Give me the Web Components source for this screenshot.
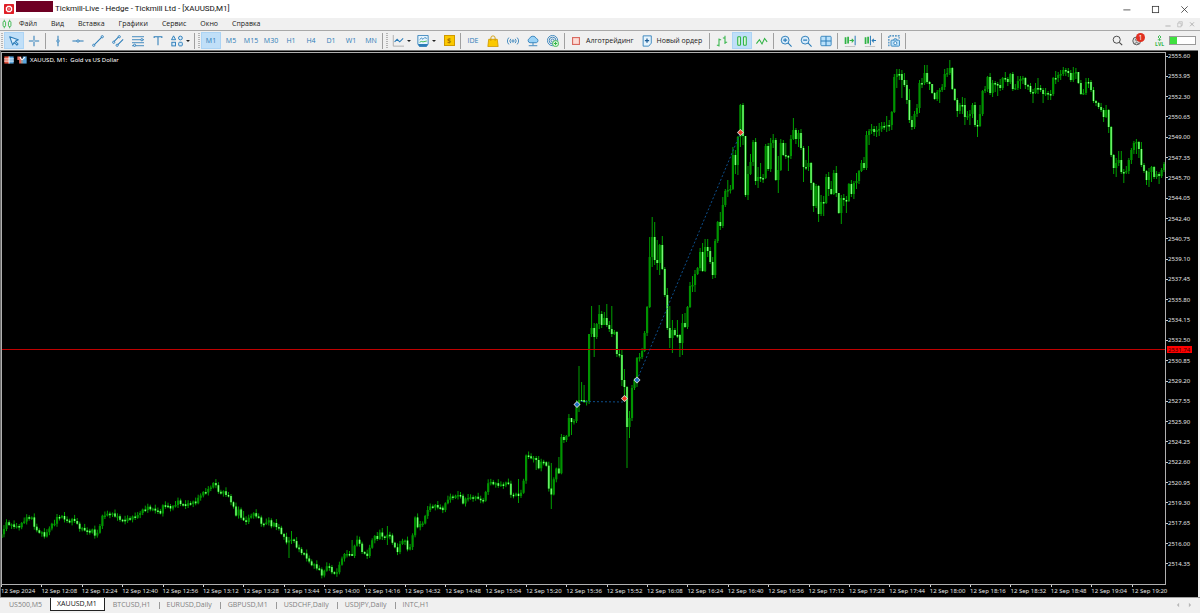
<!DOCTYPE html>
<html lang="ru">
<head>
<meta charset="utf-8">
<title>Tickmill-Live - Hedge - Tickmill Ltd - [XAUUSD,M1]</title>
<style>
  html, body {
    height: 100%;
    margin: 0;
  }

  body {
    background: #f0f0f0;
    color: #1a1a1a;
    font-family: "Open Sans", "Noto Sans", sans-serif;
    font-size: 7px;
    line-height: 10px;
    overflow: hidden;
  }
</style>
</head>
<body>
<terminal-window></terminal-window>

<script>
const BLUE = "#2b7cb8";
const GREEN = "#2fb344";

const ICONS = {
  logo: `<rect width="14" height="14" rx="1" fill="#e01e26"/><path d="M5 2.500h4L11.500 5v4L9 11.500H5L2.500 9V5z" fill="#fff"/><path d="M5.500 4.500h3l1 1v3l-1 1h-3l-1-1v-3z" fill="#e01e26"/><circle cx="7" cy="7" r="1" fill="#fff"/>`,
  candlesSmall: `<g fill="none" stroke="${GREEN}" stroke-width="1.200"><rect x="1.500" y="3.500" width="3.500" height="7" rx="1"/><rect x="9" y="3.500" width="3.500" height="7" rx="1"/><path d="M3.200 1v2M3.200 11v2M10.700 1v2M10.700 11v2"/></g>`,
  cursor: `<path d="M2 2l10 3.500-3.500 1.800 3.300 3.200-1.400 1.400-3.200-3.300-1.800 3z" fill="#d9ecfb" stroke="${BLUE}" stroke-width="1.200" stroke-linejoin="round"/>`,
  cross: `<path d="M7 1v12M1 7h12" stroke="${BLUE}" stroke-width="1.200"/><circle cx="7" cy="7" r="1" fill="#f0f0f0"/>`,
  vline: `<path d="M7 1v12" stroke="${BLUE}" stroke-width="1.200"/><circle cx="7" cy="7" r="1.400" fill="#d9ecfb" stroke="${BLUE}"/>`,
  hline: `<path d="M0.500 7h13" stroke="${BLUE}" stroke-width="1.200"/><circle cx="7" cy="7" r="1.400" fill="#d9ecfb" stroke="${BLUE}"/>`,
  trend: `<path d="M2 12L12 2" stroke="${BLUE}" stroke-width="1.200"/><circle cx="2" cy="12" r="1.300" fill="#d9ecfb" stroke="${BLUE}"/><circle cx="12" cy="2" r="1.300" fill="#d9ecfb" stroke="${BLUE}"/>`,
  channel: `<path d="M2 8l6-6M6 12l7-7" stroke="${BLUE}" stroke-width="1.200"/><circle cx="2" cy="8.500" r="1.300" fill="#d9ecfb" stroke="${BLUE}"/><circle cx="8.500" cy="2" r="1.300" fill="#d9ecfb" stroke="${BLUE}"/><circle cx="6" cy="12" r="1.300" fill="#d9ecfb" stroke="${BLUE}"/>`,
  fibo: `<path d="M0 2h14M0 5.500h14M0 9h14M0 12.500h14" stroke="${BLUE}"/><circle cx="11.500" cy="5.500" r="1.300" fill="#d9ecfb" stroke="${BLUE}"/><circle cx="3" cy="12" r="1.300" fill="#d9ecfb" stroke="${BLUE}"/>`,
  text: `<path d="M2.500 3.500V2h9v1.500M7 2v10" fill="none" stroke="${BLUE}" stroke-width="1.200"/>`,
  shapes: `<g fill="#d9ecfb" stroke="${BLUE}" stroke-width="1.100"><path d="M3 1l2.400 4.500H0.600z"/><circle cx="11" cy="3.500" r="2.200"/><rect x="1" y="8.500" width="4.200" height="4.200"/><rect x="9" y="8.500" width="4.200" height="4.200" rx="1"/></g>`,
  lineChart: `<path d="M1.500 0v13H14" fill="none" stroke="#aaa"/><path d="M3 8l3-3 3 3 4-4" fill="none" stroke="${BLUE}" stroke-width="1.200"/>`,
  indicator: `<path d="M1 0.500h12v10l-2 3H3l-2-3z" fill="#e6f4fd" stroke="${BLUE}"/><path d="M1 10.500h12l-2 3H3z" fill="${BLUE}"/><path d="M3 5.500l2-2 2 1.500 2-2 2.500 1" fill="none" stroke="${BLUE}"/><path d="M3 8.500l2-1 2 .5 4.500-1" fill="none" stroke="${GREEN}"/>`,
  bag: `<path d="M2 5h10l1 8.500H1z" fill="#fbc900" stroke="#d09a00"/><path d="M4.500 7V3.500a2.500 2.500 0 0 1 5 0V7" fill="none" stroke="#d09a00"/>`,
  signal: `<circle cx="7" cy="7" r="1.300" fill="none" stroke="${BLUE}"/><path d="M4.500 4.500a3.500 3.500 0 0 0 0 5M9.500 4.500a3.500 3.500 0 0 1 0 5M2.200 3a6 6 0 0 0 0 8M11.800 3a6 6 0 0 1 0 8" fill="none" stroke="${BLUE}"/>`,
  cloud: `<path d="M3.500 9a2.600 2.600 0 0 1-.5-5 4.200 4.200 0 0 1 7.800 0A2.600 2.600 0 0 1 11 9z" fill="#9bd3f7" stroke="${BLUE}"/><path d="M7 9v3M2 12.500h10" stroke="${BLUE}"/>`,
  target: `<g fill="none" stroke="${BLUE}"><circle cx="6.500" cy="6.500" r="6"/><circle cx="6.500" cy="6.500" r="4"/><circle cx="6.500" cy="6.500" r="1.800"/></g><circle cx="10" cy="10" r="3.500" fill="#e8fbe8" stroke="${GREEN}"/><path d="M10 8v4M8 10h4" stroke="${GREEN}" stroke-width="1.200"/>`,
  stop: `<rect x="3" y="3" width="8" height="8" fill="#fddcd6" stroke="#d96a60" stroke-width="1.300"/>`,
  order: `<path d="M2.500 1h9.500v8.500l-3 3.500H2.500z" fill="#e6f4fd" stroke="${BLUE}" stroke-linejoin="round"/><path d="M7 4v5M4.500 6.500h5" stroke="#1f5f98" stroke-width="1.500"/>`,
  bars: `<path d="M3.500 4v9.500M1 12h2.500M3.500 5.500H6M10.500 1v9.500M8 3.500h2.500M10.500 8.500H13" stroke="${GREEN}" stroke-width="1.200"/>`,
  candles: `<g fill="#d8f7d8" stroke="${GREEN}" stroke-width="1.200"><rect x="2" y="2" width="3.300" height="10" rx="1"/><rect x="8.700" y="2" width="3.300" height="10" rx="1"/></g>`,
  line: `<path d="M0.500 10L4 5.500l3 5L10 4l3 4" fill="none" stroke="${GREEN}" stroke-width="1.200"/>`,
  zoomIn: `<circle cx="6" cy="6" r="4.600" fill="#d9ecfb" stroke="${BLUE}" stroke-width="1.100"/><path d="M9.300 9.300l4.200 4.200M3.700 6h4.600M6 3.700v4.600" stroke="${BLUE}" stroke-width="1.300"/>`,
  zoomOut: `<circle cx="6" cy="6" r="4.600" fill="#d9ecfb" stroke="${BLUE}" stroke-width="1.100"/><path d="M9.300 9.300l4.200 4.200M3.700 6h4.600" stroke="${BLUE}" stroke-width="1.300"/>`,
  tile: `<rect x="1" y="1.500" width="12" height="11" rx="1" fill="#b9e1fb" stroke="${BLUE}"/><path d="M7 1.500v11M1 7h12" stroke="${BLUE}" stroke-width="1.200"/>`,
  shift: `<path d="M1 13.500h12" stroke="#bbb"/><path d="M1.800 2.500v8M4.800 2v8" stroke="${GREEN}" stroke-width="2"/><path d="M6.500 6.500h4.500M9 4.500l2 2-2 2" fill="none" stroke="${GREEN}" stroke-width="1.200"/><path d="M13 1v11" stroke="${BLUE}" stroke-width="1.200"/>`,
  scroll: `<path d="M1 13.500h12" stroke="#bbb"/><path d="M1.800 2.500v8M4.800 2v8" stroke="${GREEN}" stroke-width="2"/><path d="M7.500 1v11" stroke="${BLUE}" stroke-width="1.200"/><path d="M14 6.500H9.500M11.500 4.500l-2 2 2 2" fill="none" stroke="${BLUE}" stroke-width="1.200"/>`,
  camera: `<path d="M1 13V1h12v3" fill="none" stroke="${BLUE}" stroke-width="1.300" stroke-dasharray="2 1.200"/><rect x="3.500" y="6" width="10" height="7" rx="1" fill="#b9e1fb" stroke="${BLUE}"/><path d="M6.500 6l.8-1.500h2.500l.8 1.500" fill="#b9e1fb" stroke="${BLUE}"/><circle cx="8.500" cy="9.500" r="1.800" fill="#fff" stroke="${BLUE}"/>`,
  search: `<circle cx="6" cy="6" r="4.500" fill="none" stroke="#444" stroke-width="1.200"/><path d="M9.300 9.300l3.700 3.700" stroke="#444" stroke-width="1.300"/>`,
  profile: `<circle cx="6" cy="7.500" r="5" fill="#ddd" stroke="#555" stroke-width="1.200"/><circle cx="6" cy="6" r="1.500" fill="none" stroke="#555"/><path d="M3 11q3-3 6 0" fill="none" stroke="#555"/>`,
  level: `<path d="M7 1l3 3-3 3-3-3z" fill="none" stroke="${GREEN}" stroke-width="1.800"/><path d="M7 7v5M3.500 9.500h7" stroke="${GREEN}" stroke-width="1.500"/>`,
  minimize: `<path d="M3 7.500h9" stroke="#333"/>`,
  maximize: `<rect x="3" y="3" width="8" height="8" fill="none" stroke="#333"/>`,
  close: `<path d="M3 3l8 8M11 3l-8 8" stroke="#333"/>`,
  restore: `<path d="M3 5.500h6V12H3zM5 5V3h6v6.500H9" fill="none" stroke="#aaa"/>`,
  minimizeGray: `<path d="M2.500 10.500h9" stroke="#aaa" stroke-width="1.500"/>`,
  closeGray: `<path d="M3.500 4l7 7M10.500 4l-7 7" stroke="#aaa" stroke-width="1.500"/>`,
  left: `<path d="M9 3L5 7l4 4z" fill="#b8b8b8"/>`,
  right: `<path d="M5 3l4 4-4 4z" fill="#b8b8b8"/>`,
  book: `<rect x="0.500" y="2" width="6.500" height="10" fill="#e0533f"/><rect x="7" y="2" width="6.500" height="10" fill="#5aa5dc"/><path d="M0 5.500h14M0 8.500h14M7 2v10" stroke="#fff" stroke-width="1.200"/>`,
  trade: `<path d="M0.500 2H6v10H3V7H0.500z" fill="#e86f60"/><path d="M8 2h5.500v10H8z" fill="#5aa5dc"/><path d="M4 3l3 4 4-4M7 7v5" stroke="#fff" stroke-width="1.500" fill="none"/>`,
};

const icon = (name, size = 14) =>
  `<svg width="${size}" height="${size}" viewBox="0 0 14 14" aria-hidden="true">${ICONS[name]}</svg>`;

// Adds an open shadow root filled from a template string
function attach(host, html) {
  const template = document.createElement("template");
  template.innerHTML = html;
  host.attachShadow({ mode: "open" }).appendChild(template.content);
}

customElements.define(
  "title-bar",
  class TitleBar extends HTMLElement {
    constructor() {
      super();
      attach(this, `
        <style>
          :host { display: flex; align-items: center; height: 18px; padding: 0 10px 0 4px; background: #fff; color: #111; font-family: Roboto, sans-serif; font-size: 8px; }
          svg { display: block; }
          .account { width: 37px; height: 11px; margin: 1px 2px 0; background: #6e0023; align-self: flex-start; }
          .title { flex: 1; white-space: nowrap; }
          .controls { display: flex; gap: 18px; }
          button { display: block; border: 0; padding: 0; background: none; }
        </style>
        ${icon("logo", 10)}
        <div class="account"></div>
        <div class="title"><slot></slot></div>
        <div class="controls">
          <button aria-label="Minimize">${icon("minimize", 11)}</button>
          <button aria-label="Maximize">${icon("maximize", 11)}</button>
          <button aria-label="Close">${icon("close", 11)}</button>
        </div>
      `);
    }
  }
);

customElements.define(
  "menu-bar",
  class MenuBar extends HTMLElement {
    constructor() {
      super();
      const items = ["Файл", "Вид", "Вставка", "Графики", "Сервис", "Окно", "Справка"];
      attach(this, `
        <style>
          :host { display: flex; align-items: center; height: 12px; padding: 0 4px 0 2px; border-bottom: 1px solid #a8a8a8; }
          svg { display: block; }
          nav { display: flex; flex: 1; gap: 14px; margin-left: 7px; }
          .controls { display: flex; gap: 4px; }
          button { border: 0; padding: 0; background: none; color: inherit; font: inherit; }
        </style>
        ${icon("candlesSmall", 10)}
        <nav>${items.map((t) => `<button>${t}</button>`).join("")}</nav>
        <div class="controls">
          <button aria-label="Minimize chart">${icon("minimizeGray", 8)}</button>
          <button aria-label="Restore chart">${icon("restore", 8)}</button>
          <button aria-label="Close chart">${icon("closeGray", 8)}</button>
        </div>
      `);
    }
  }
);

customElements.define(
  "tool-button",
  class ToolButton extends HTMLElement {
    constructor() {
      super();
      const name = this.getAttribute("icon");
      attach(this, `
        <style>
          :host { display: block; flex: none; }
          button {
            display: flex; align-items: center; justify-content: center; gap: 2px;
            box-sizing: border-box; min-width: 20px; height: 17px; padding: 0;
            border: 0; background: none; color: ${BLUE}; font: inherit; white-space: nowrap;
          }
          :host([active]) button { background: #c0dff8; box-shadow: inset 0 0 0 1px #acd4f5; }
          :host([wide]) button { gap: 4px; padding: 0 4px 0 3px; color: #1a1a1a; }
          :host([menu]) button { justify-content: flex-start; gap: 3px; min-width: 25px; padding-left: 3px; }
          .caret { border: 2px solid transparent; border-top-color: #222; border-bottom: 0; }
          svg { display: block; }
        </style>
        <button aria-label="${this.getAttribute("label") || this.textContent}">
          ${name ? icon(name, 12) : ""}<slot></slot>
          ${this.hasAttribute("menu") ? '<span class="caret"></span>' : ""}
        </button>
      `);
    }
  }
);

customElements.define(
  "tool-bar",
  class ToolBar extends HTMLElement {
    constructor() {
      super();
      const frames = ["M5", "M15", "M30", "H1", "H4", "D1", "W1", "MN"];
      attach(this, `
        <style>
          :host { display: flex; align-items: center; height: 19px; padding-right: 4px; }
          .grip { width: 2px; height: 16px; margin: 0 1px; background: repeating-linear-gradient(#b5b5b5 0 1px, transparent 1px 2px); }
          .sep { width: 1px; height: 16px; margin: 0 2px 0 1px; background: #a0a0a0; }
          .sep.loose { margin-left: 3px; }
          .spacer { flex: 1; }
          .dollar { display: block; width: 9px; height: 9px; border: 1px solid #d09a00; background: #fbc900; color: #a87500; line-height: 9px; font-weight: 700; }
          .right { display: flex; align-items: center; gap: 9px; }
          .profile { position: relative; margin-right: 3px; }
          .badge { position: absolute; left: 4px; top: -2px; width: 9px; height: 9px; border-radius: 5px; background: #e03020; color: #fff; line-height: 9px; text-align: center; }
          .status { display: flex; align-items: center; gap: 5px; }
          .level { display: grid; justify-items: center; color: ${GREEN}; font-size: 5px; line-height: 5px; font-weight: 700; }
          .right svg { display: block; }
          .right button { display: block; border: 0; padding: 0; background: none; font: inherit; }
          .battery { box-sizing: border-box; width: 27px; height: 9px; border: 1px solid #999; background: linear-gradient(90deg, #3fe03f 7px, #fff 7px); }
        </style>
        <div class="grip"></div>
        <tool-button icon="cursor" label="Cursor" active></tool-button>
        <tool-button icon="cross" label="Crosshair"></tool-button>
        <div class="sep"></div>
        <tool-button icon="vline" label="Vertical line"></tool-button>
        <tool-button icon="hline" label="Horizontal line"></tool-button>
        <tool-button icon="trend" label="Trend line"></tool-button>
        <tool-button icon="channel" label="Channel"></tool-button>
        <tool-button icon="fibo" label="Fibonacci"></tool-button>
        <tool-button icon="text" label="Text"></tool-button>
        <tool-button icon="shapes" label="Shapes" menu></tool-button>
        <div class="sep"></div>
        <div class="grip"></div>
        <tool-button active>M1</tool-button>
        ${frames.map((f) => `<tool-button>${f}</tool-button>`).join("")}
        <div class="sep"></div>
        <div class="grip"></div>
        <tool-button icon="lineChart" label="Chart type" menu></tool-button>
        <tool-button icon="indicator" label="Indicators" menu></tool-button>
        <tool-button label="Deposit"><span class="dollar">$</span></tool-button>
        <div class="sep"></div>
        <tool-button>IDE</tool-button>
        <tool-button icon="bag" label="Market"></tool-button>
        <tool-button icon="signal" label="Signals"></tool-button>
        <tool-button icon="cloud" label="VPS"></tool-button>
        <tool-button icon="target" label="Copy"></tool-button>
        <div class="sep"></div>
        <tool-button icon="stop" wide>Алготрейдинг</tool-button>
        <tool-button icon="order" wide>Новый ордер</tool-button>
        <div class="sep loose"></div>
        <tool-button icon="bars" label="Bars"></tool-button>
        <tool-button icon="candles" label="Candles" active></tool-button>
        <tool-button icon="line" label="Line"></tool-button>
        <div class="sep"></div>
        <tool-button icon="zoomIn" label="Zoom in"></tool-button>
        <tool-button icon="zoomOut" label="Zoom out"></tool-button>
        <tool-button icon="tile" label="Tile windows"></tool-button>
        <div class="sep"></div>
        <tool-button icon="shift" label="Chart shift"></tool-button>
        <tool-button icon="scroll" label="Auto scroll"></tool-button>
        <div class="sep"></div>
        <tool-button icon="camera" label="Screenshot"></tool-button>
        <div class="sep"></div>
        <div class="spacer"></div>
        <div class="right">
          <button aria-label="Search">${icon("search", 11)}</button>
          <button class="profile" aria-label="Notifications">${icon("profile", 11)}<span class="badge">1</span></button>
          <div class="status">
            <div class="level">${icon("level", 7)}<span>LVL</span></div>
            <div class="battery"></div>
          </div>
        </div>
      `);
    }
  }
);

const STEP = 2.522;
const FIRST_X = 1.5;

// Quiet part of the session: x,y turning points of the close
const QUIET = `0,538 6,523 12,526 20,526 25,520 31,515 36,531 41,533 45,536 50,526 55,523 58,516 63,516 68,523 74,519
80,528 85,530 88,533 93,529 96,538 100,525 103,515 110,513 118,518 123,520 130,519 137,516 140,512 148,508 155,509
160,514 164,504 172,508 178,502 185,505 197,502 199,495 208,491 213,483 216,484 219,495 222,492 228,495 232,503
237,518 239,509 242,520 247,521 252,514 258,516 263,526 268,520 271,526 273,522 280,530 283,537 287,542 292,538
298,550 305,554 310,564 315,566 320,570 323,577 326,565 331,570 334,574 338,570 342,558 347,553 352,555 357,539
363,553 368,555 373,537 378,538 380,532 385,539 388,533 393,543 397,552 402,540 405,542 409,552 412,538 415,518
418,528 423,522 428,508 437,506 443,509 448,499 455,496 459,493 463,503 468,497 478,498 482,503 485,495 488,482
497,485 510,483 511,497 515,493 518,495 523,493 524,470 527,451 530,459 535,456 538,469 543,460 547,467 549,490
552,497 554,477 557,468 560,475`.split(/\s+/).map((p) => p.split(",").map(Number));

const QUIET_WICKS = { 114: [537, 558], 115: [531, 544], 139: [540, 556], 153: [526, 545], 151: [528, 540],
  218: [463, 509], 221: [457, 474], 212: [456, 470], 205: [479, 503], 96: [511, 521] };

// Active part, one entry for each candle: close[,high,low]
const ACTIVE = `437 440 436 418 422,418,435 421 405,400,423 400,366,412 400,382,402 402,385,403 401 334,334,404 328,306,337
337,323,357 324 314,305,329 325 318,312,325 325,304,327 329 334,306,337 332 354 355 380,350,386 387,369,400
427,386,468 418,411,438 388 380 358,357,387 357 351 333 307 257,237,308 237,217,267 260,222,265 263,240,270
245,244,275 269,236,270 295 328,288,330 338,306,348 330,320,353 335 335,320,338 343,334,357 323,314,355
327,313,328 307 286 285,276,292 274,270,292 268 252 271,243,272 247,239,272 251,239,257 262 275,257,279 241
222 226,212,230 205,197,228 191 190,180,197 189 155,147,190 165,150,174 137,136,175
105,104,147 136,103,145 195,136,197 174,166,200 162,154,175 142,140,166 181,138,185 177,167,188 178,163,182
178,174,183 146 169,143,171 143,138,172 140,134,148 180,138,181 170,156,193 143 155,140,156 156,143,159
156,155,171 139 130,118,140 139,128,144 133,130,147 148 167,146,182 167,160,170 163,146,171 183,162,190
206,182,212 186 214,185,222 202,195,216 203,196,216 177,174,204 189,172,196 194,181,195 173 193,166,197
213,193,214 198,195,224 200,194,206 201,196,213 184 194 183,181,199 181,173,189 171 163,160,172 168,157,170
135,131,170 131,129,145 129,124,134 132,126,136 130,126,137 129,123,136 126 126,122,130 125,116,132 125,120,131
112,111,130 77,74,113 74,69,88 74,69,80 80,70,98 85,73,87 100,80,104 120,89,123 127 114 108,104,117 83,80,113
83,78,88 73,65,85 82,65,84 84,81,90 93,84,94 99,92,100 92,90,101 90,88,103 87,84,92 74,69,90 73,68,77 68,60,75
89,67,90 100,88,101 111,98,117 105,103,114 105,97,114 117,98,125 116,111,120 114,110,125 105,103,118 125,102,127
126,120,137 114,105,127 91,90,116 89,86,93 77,76,92 93,73,95 83,80,97 84,81,92 85,82,96 88,79,91 78,77,90
79,72,82 82,77,86 74,73,84 89,72,91 88,84,90 81,76,90 79,76,89 78,76,84 85,77,89 86,84,90 92,83,94 93,89,103
88,83,94 88,78,94 90,85,92 94,88,103 93,88,96 94,91,100 94,90,100 78,77,96 78,71,84 75,72,82 74,70,80 70,67,76
71,68,76 73,68,77 80,70,82 73,67,82 72,68,79 83,72,84 94,80,95 93,89,95 82,78,95 82,78,88 90,80,92 101,87,103
103,100,106 107,102,109 110,103,112 117,108,122 110,105,118 127,109,133 155,126,157 168,154,174 163,158,177
160,151,166 172,151,174 172,169,183 171,166,174 160,158,174 150,148,164 143,141,154 142,139,154 149,141,158
165,142,167 171,163,173 180,170,185 172,168,187 167,166,182 177,166,179 174,171,179 176,172,184 170,168,178
164,162,172`.split(/\s+/).map((c) => c.split(",").map(Number));

function quietClose(x) {
  const next = QUIET.findIndex((p) => p[0] > x);
  if (next < 1) return QUIET[QUIET.length - 1][1];
  const [x0, y0] = QUIET[next - 1];
  const [x1, y1] = QUIET[next];
  return y0 + ((y1 - y0) * (x - x0)) / (x1 - x0);
}

function drawCandles() {
  const shapes = { wick: "", up: "", down: "" };
  const quietCount = 222;
  let open = 538;
  for (let i = 0; i < quietCount + ACTIVE.length; i++) {
    const x = FIRST_X + i * STEP;
    let close, high, low;
    if (i < quietCount) {
      close = quietClose(x) + [0, 1.2, -1, 0.5, -1.4, 1][i % 6];
      [high, low] = QUIET_WICKS[i] || [];
    } else {
      [close, high, low] = ACTIVE[i - quietCount];
    }
    const top = Math.min(open, close);
    const bottom = Math.max(open, close, top + 1.5);
    high = Math.min(high ?? top - 1 - ((i * 7) % 4), top);
    low = Math.max(low ?? bottom + 1 + ((i * 5) % 3), bottom);
    shapes.wick += `M${x.toFixed(1)} ${high.toFixed(1)}V${low.toFixed(1)}`;
    shapes[close < open ? "up" : "down"] += `M${x.toFixed(1)} ${top.toFixed(1)}V${bottom.toFixed(1)}`;
    open = close;
  }
  return `
    <path d="${shapes.wick}" stroke="#00a000"/>
    <path d="${shapes.up}" stroke="#009400" stroke-width="2.200"/>
    <path d="${shapes.down}" stroke="#10c010" stroke-width="2.200"/>
    <path d="${shapes.down}" stroke="#90ff90"/>`;
}

const deal = (x, y, color) =>
  `<path d="M${x - 3.5} ${y}l3.500-3.500 3.500 3.500-3.500 3.500z" fill="#ddd"/><path d="M${x - 2.5} ${y}l2.500-2.500 2.500 2.500-2.500 2.500z" fill="${color}"/>`;

customElements.define(
  "price-chart",
  class PriceChart extends HTMLElement {
    constructor() {
      super();
      const prices = Array.from({ length: 26 }, (_, i) => (2555.6 - i * 1.65).toFixed(2));
      const times = Array.from({ length: 29 }, (_, i) => {
        const m = 11 * 60 + 52 + i * 16;
        return i ? `12 Sep ${Math.floor(m / 60)}:${String(m % 60).padStart(2, "0")}` : "12 Sep 2024";
      });
      attach(this, `
        <style>
          :host {
            display: grid; grid-template: minmax(0, 1fr) 12px / minmax(0, 1fr) 32px;
            box-sizing: border-box; margin-right: 2px; padding-top: 1px; border-top: 1px solid #707070; border-left: 1px solid #707070;
            background: #000; color: #e4e4e4; font-family: "Noto Sans", sans-serif; font-size: 6px; line-height: 8px;
          }
          .plot { position: relative; min-height: 0; border: 1px solid #b0b0b0; }
          .plot > svg { display: block; width: 100%; height: 100%; }
          .heading { position: absolute; left: 2px; top: 2px; display: flex; align-items: center; gap: 3px; white-space: pre; color: #fff; }
          .heading svg { display: block; }
          .prices { position: relative; display: flex; flex-direction: column; justify-content: space-between; margin-bottom: 17px; }
          .prices div { display: flex; align-items: center; height: 8px; }
          .prices div::before { content: ""; width: 2px; height: 1px; background: #ccc; }
          .prices .current { position: absolute; left: 1px; right: 6px; top: 57%; height: 7px; padding-left: 1px; background: #f00; color: #300; }
          .prices .current::before { display: none; }
          .times { grid-column: 1 / -1; display: grid; grid-template-columns: repeat(29, minmax(0, 1fr)); margin-right: 26px; white-space: nowrap; }
          .times div::before { content: ""; display: block; width: 1px; height: 2px; background: #ccc; }
        </style>
        <div class="plot">
          <svg viewBox="2 53 1163 531" preserveAspectRatio="none" fill="none" role="img" aria-label="XAUUSD M1">
            ${drawCandles()}
            <rect x="2" y="349" width="1163" height="1" fill="#c00000"/>
            <path d="M581 401.500L624 402M637 380L740 134" stroke="#0d4f8c" stroke-dasharray="2 2"/>
            ${deal(577, 404.5, "#1d6fc0")}${deal(637, 380, "#1d6fc0")}
            ${deal(624.5, 398.5, "#f03a20")}${deal(740.5, 132.5, "#f03a20")}
          </svg>
          <div class="heading">${icon("book", 10)}${icon("trade", 10)}<span>XAUUSD, M1:  Gold vs US Dollar</span></div>
        </div>
        <div class="prices">
          ${prices.map((p) => `<div>${p}</div>`).join("")}
          <div class="current">2531.74</div>
        </div>
        <div class="times">${times.map((t) => `<div>${t}</div>`).join("")}</div>
      `);
    }
  }
);

customElements.define(
  "chart-tabs",
  class ChartTabs extends HTMLElement {
    constructor() {
      super();
      const tabs = ["US500,M5", "XAUUSD,M1", "BTCUSD,H1", "EURUSD,Daily", "GBPUSD,M1", "USDCHF,Daily", "USDJPY,Daily", "INTC,H1"];
      attach(this, `
        <style>
          :host { display: flex; align-items: flex-start; box-sizing: border-box; height: 16px; padding: 0 6px 0 1px; border-top: 1px solid #a0a0a0; color: #808080; }
          button { box-sizing: border-box; height: 13px; padding: 0 8px; border: 0; background: none; color: inherit; font: inherit; line-height: 13px; }
          button + button { background: linear-gradient(#999, #999) 0 4px / 1px 7px no-repeat; }
          button.active { background: #fff; border: 1px solid #222; border-top: 0; padding: 0 7px 0 6px; color: #111; line-height: 12px; }
          button.active + button { background: none; }
          .tabs { display: flex; flex: 1; }
          .arrows { display: flex; gap: 4px; }
          .arrows button { padding: 0; background: none; }
          svg { display: block; }
        </style>
        <div class="tabs">
          ${tabs.map((t) => `<button${t === "XAUUSD,M1" ? ' class="active"' : ""}>${t}</button>`).join("")}
        </div>
        <div class="arrows">
          <button aria-label="Previous">${icon("left", 8)}</button>
          <button aria-label="Next">${icon("right", 8)}</button>
        </div>
      `);
    }
  }
);

customElements.define(
  "terminal-window",
  class TerminalWindow extends HTMLElement {
    constructor() {
      super();
      attach(this, `
        <style>
          :host { display: flex; flex-direction: column; height: 100vh; }
          price-chart { flex: 1; min-height: 0; }
        </style>
        <title-bar>Tickmill-Live - Hedge - Tickmill Ltd - [XAUUSD,M1]</title-bar>
        <menu-bar></menu-bar>
        <tool-bar></tool-bar>
        <price-chart></price-chart>
        <chart-tabs></chart-tabs>
      `);
    }
  }
);
</script>
</body>
</html>
